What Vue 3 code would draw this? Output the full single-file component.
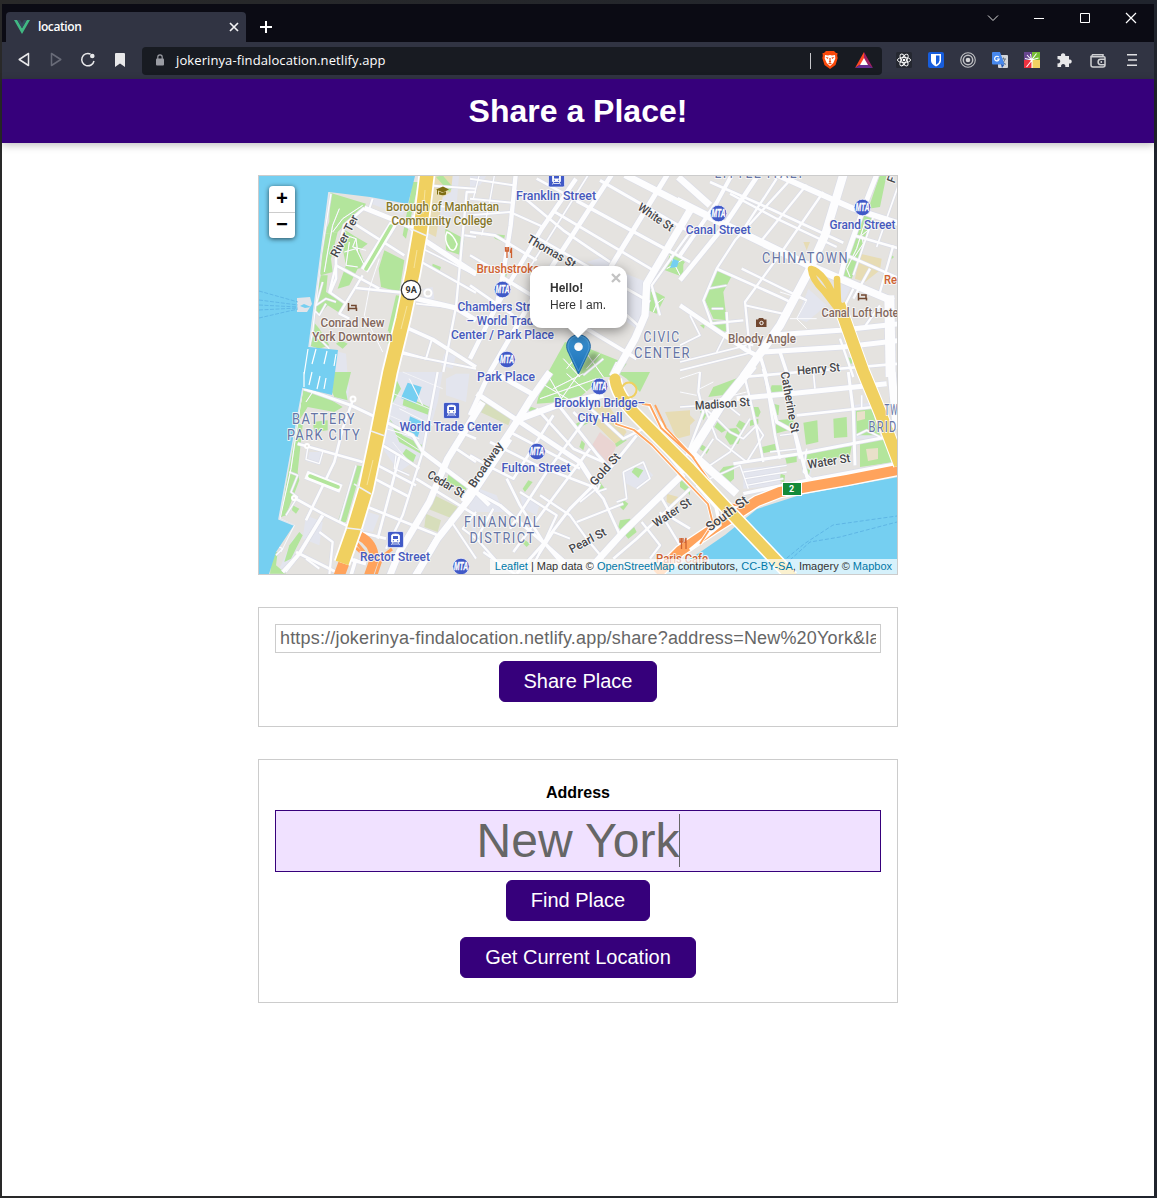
<script setup>
import { ref } from 'vue'

const shareLink = ref('https://jokerinya-findalocation.netlify.app/share?address=New%20York&lat=40.7127&lng=-74.0059')
const address = ref('New York')

// Streets are grouped in six sheets, each drawn at three times the map scale.
const sheets = [
  {
    x: 256, y: 172,
    zones: [
      'M495 0H610L600 120L550 160L505 205L480 160Z', 'M215 530L270 545L275 615H230Z',
      'M340 75L455 100L440 130L345 95Z', 'M500 350L530 345L535 380L505 385Z', 'M565 545L600 550L590 590L555 580Z'
    ],
    sand: ['M505 10H590L585 60L560 75L540 195L510 180L500 90Z'],
    parks: [
      'M222 62L330 95L320 115L290 135L245 180L205 185L220 150Z', 'M205 185L245 180L225 260L230 300L195 310L185 290Z',
      'M268 175L300 195L335 215L310 235L330 285L305 290L280 340L245 350L270 280L262 240Z',
      'M385 235L445 265L430 360L375 345L368 290Z', 'M195 310L215 310L210 360L250 385L270 400L255 425L215 400L190 430L170 410Z',
      'M165 440L190 470L220 520L190 530L158 520Z', 'M568 170L625 200L615 250L570 235Z', 'M530 275L555 285L550 300L527 292Z',
      'M400 470L415 475L410 520L395 515Z', 'M540 15L560 10L590 45L580 60Z', 'M470 30L488 30L450 200L440 190Z', 'M420 370L435 372L410 480L395 478Z',
      'M240 515L255 505L275 515L260 530Z'
    ],
    roads: [
      [8, 'M295 155L445 250'], [7, 'M500 272L660 362'], [14, 'M325 108L460 162L505 205'], [16, 'M505 205L660 306'],
      [24, 'M412 155L325 295'], [8, 'M240 280L370 350M300 348L440 362'], [15, 'M480 380L600 408L660 445'],
      [7, 'M320 310L250 425L280 440'], [7, 'M240 280L220 360L270 395'], [11, 'M425 455L530 502L660 585'], [7, 'M660 60L632 60L600 405L562 600'],
      [6, 'M510 40L660 50M505 100L660 110M625 190L660 195'], [6, 'M528 500L510 560L440 540'], [3, 'M370 260L340 350L325 430L380 540'],
      [8, 'M325 108L265 160L240 260L240 320L222 362'], [6, 'M470 130L505 205M350 80L340 110L460 162'], [6, 'M440 545L520 562L660 590'], [5, 'M480 395L600 408M500 230L660 310'],
      [4, 'M225 65L195 250L170 480L160 525M200 330L180 400L210 380L240 390M210 395L190 430L170 410M160 470L220 530'],
      [3, 'M270 190L300 200L290 225L330 235M265 240L300 230L325 280M280 210L270 280L305 285M300 200L305 240M250 110L230 160L215 240L205 300M320 100L260 140L230 180']
    ]
  },
  {
    x: 470, y: 172,
    zones: ['M350 270L400 255L430 290L530 330L540 420L500 470L470 450L470 330Z', 'M0 0L50 10L30 40L0 45Z'],
    sand: [],
    parks: [
      'M600 245L640 255L640 315L585 295Z', 'M540 350L585 375L560 425L535 415Z', 'M285 510L345 525L470 575L440 615H240L235 600Z',
      'M65 185L105 190L100 210L75 200Z', 'M100 300L112 300L105 330L95 325Z'
    ],
    roads: [
      [13, 'M137 8L122 160L102 290L80 400L0 560'], [13, 'M318 20L215 170L120 330L60 440'], [14, 'M425 8L235 300L60 600'],
      [15, 'M592 8L425 280L400 340'], [22, 'M660 115L530 335L525 430L495 500L430 615'], [6, 'M0 20L130 40M0 80L125 92M0 130L120 120L220 165'],
      [8, 'M0 180L75 190L200 265'], [8, 'M135 55L280 175L360 230L420 270'], [8, 'M200 20L660 270'], [9, 'M390 25L660 180'],
      [8, 'M320 88L610 245'], [8, 'M255 120L550 295'], [8, 'M190 190L540 390'], [20, 'M465 8L660 108'], [11, 'M95 315L300 440L500 560'],
      [8, 'M460 420L515 470'], [8, 'M0 340L130 430'], [7, 'M0 250L95 305'], [7, 'M660 180L545 340L570 430'], [5, 'M355 8L235 200L170 300'], [4, 'M30 0L10 80M75 0L55 110L35 190M400 560L340 610M440 570L420 610'],
      [3, 'M280 560L330 615M340 530L400 615M390 545L350 590M330 540L290 590M600 250L630 310M590 290L640 262M545 355L560 395L550 420M560 395L580 380']
    ]
  },
  {
    x: 680, y: 172,
    zones: ['M490 280L515 340L490 390L465 330Z', 'M385 350L440 400L380 450L350 440Z'],
    sand: ['M540 245L605 260L600 295L555 330L525 320Z', 'M370 210L390 210L380 235Z'],
    parks: [
      'M108 295L155 312L130 360L140 445L100 440L75 385Z', 'M90 445L138 448L138 480L95 465Z', 'M600 8L620 8L600 105L565 110Z',
      'M550 130L580 135L515 320L485 310L520 220Z', 'M0 260L15 270L0 290Z', 'M60 460L75 455L72 470Z', 'M630 245L642 255L635 262Z', 'M500 555L520 560L515 575L505 575Z'
    ],
    roads: [
      [22, 'M-10 85L130 155L390 282L640 388'], [12, 'M160 0L110 92L0 250'], [14, 'M235 8L130 165L0 325'], [7, 'M345 8L165 205L110 290L70 385L95 455'],
      [7, 'M290 20L185 180'], [7, 'M430 60L305 240L195 390L210 540'], [7, 'M380 38L245 205'], [25, 'M490 8L435 190L385 300L300 460L190 615'],
      [15, 'M590 8L550 110L490 280L480 320'], [8, 'M90 30L270 110L490 212'], [17, 'M290 8L520 110L660 155'], [20, 'M-5 15L90 100'], [7, 'M150 65L290 140L470 225'],
      [8, 'M110 290L300 375L335 392'], [7, 'M185 290L380 385'], [13, 'M0 400L200 535L240 555'], [6, 'M195 400L330 430'], [8, 'M520 190L660 230M500 250L660 320'],
      [7, 'M570 290L520 380M640 220L600 360M520 350L495 400'], [15, 'M270 490L480 475L660 455'], [15, 'M250 540L490 525L660 505'], [8, 'M190 615L360 600L660 575'],
      [30, 'M628 370L632 615'], [10, 'M240 550L260 615M300 540L325 615'], [7, 'M480 500L520 615M600 400L550 470'], [5, 'M0 595L220 540M0 570L200 520M30 430L60 490L0 520M140 480L110 540'],
      [3, 'M300 360L380 385L350 440L380 470M330 440H410M555 150L530 230L500 290L510 315M570 170L545 190L550 215L520 260'],
      [7, 'M90 455L190 445M140 420L145 500L220 520'], [5, 'M655 40L590 225M580 135L520 310'], [4, 'M85 350L140 340M95 410H130']
    ]
  },
  {
    x: 256, y: 372,
    zones: [
      'M225 0L280 40L275 85L250 90Z', 'M420 0H560L545 90L500 250L430 300L380 230L390 60Z', 'M570 20L600 5H640L630 90L570 70Z', 'M150 430L200 450L190 520L140 500Z',
      'M110 500L140 480L100 590H70Z', 'M640 350L660 340V500L640 450Z', 'M300 410L370 430L350 480L300 470Z', 'M160 240L200 240L190 275L155 270Z'
    ],
    sand: [],
    parks: [
      'M142 50L200 68L260 105L235 120L155 105L130 145L118 150Z', 'M235 0H285L270 60L275 85L235 75L228 60Z', 'M120 150L140 160L125 300L130 325L90 430L75 435L90 330Z',
      'M170 150L215 145L215 175L175 180Z', 'M300 280L318 283L270 450L245 450Z', 'M110 400L130 410L120 425L108 415Z', 'M420 20L435 50L400 110L395 80Z', 'M445 70L530 110L520 130L440 100Z',
      'M400 140L440 190L500 220L495 245L430 210Z', 'M450 230L480 250L470 275L440 245Z', 'M580 300L635 330L630 355L570 330Z', 'M130 480L140 490L105 560L85 570L100 520Z', 'M50 540L65 540L60 580L90 605H42Z'
    ],
    olive: ['M535 370L605 405L590 440L515 410Z', 'M510 425L555 445L545 480L505 465Z'],
    pools: ['M455 32L497 45L480 95L435 78Z', 'M462 133L500 150L485 195L452 180Z'],
    roads: [
      [9, 'M145 50L285 100L380 145L470 190L500 240'], [8, 'M292 80L260 170L235 270L150 445'], [8, 'M125 215L320 270'], [8, 'M110 375L200 425L310 480L390 500'],
      [26, 'M150 308L255 350'], [8, 'M380 220L430 250L490 290'], [8, 'M430 255L365 500'], [8, 'M365 280L480 340'], [8, 'M355 320L460 375'], [8, 'M335 405L545 490'],
      [7, 'M545 0L500 240L440 430L390 530'], [13, 'M500 240L660 360L700 400'], [8, 'M480 320L660 430'], [20, 'M680 90L575 260L520 390L430 540L400 615'], [20, 'M760 200L640 380L545 500L480 610'],
      [8, 'M600 230L660 270M540 150L660 200'], [6, 'M660 420L620 470L660 500M580 440L660 560'], [10, 'M545 490L470 615'], [11, 'M200 430L130 545L80 600'], [9, 'M120 540L240 600'], [7, 'M190 480L230 510L220 610'], [6, 'M150 560L190 590'],
      [11, 'M240 550L330 575M300 560L285 610'], [3, 'M140 50L105 290L72 440L115 460L75 540M130 50L170 60L150 90M460 20L500 100M430 110L530 160M390 170L490 200'],
      [4, 'M155 230L150 262L190 275L200 240M420 250L415 290L460 310M300 280L250 450M100 300L125 310L105 360L125 375L90 430M60 520L80 530L60 550M90 600L130 550'],
      [2, 'M400 60L520 110M400 90L450 110M400 130L490 170M420 190L490 235M410 210L450 260M440 0L560 50']
    ]
  },
  {
    x: 470, y: 372,
    zones: [
      'M0 340L80 370L100 420L20 420Z', 'M150 370L210 390L200 430L160 410Z', 'M460 300L520 280L550 310L500 350L460 330Z'
    ],
    sand: ['M370 105L415 100L470 180L440 220L370 150Z', 'M585 120L660 115V190L620 200Z', 'M590 365L625 375L620 405L590 390Z'],
    rose: ['M390 180L440 220L415 275L360 230Z'],
    olive: ['M35 80L60 90L125 130L115 160L20 115Z'],
    parks: [
      'M235 10L370 0L400 15L330 75L270 90L200 95L205 75Z', 'M440 0H540L510 60L470 20Z', 'M170 100L200 110L180 120Z', 'M310 160L345 140L360 150L320 172Z', 'M335 205L345 215L340 235L328 225Z',
      'M495 285L520 295L505 318L485 300Z', 'M175 325L188 330L165 360L158 350Z', 'M458 382L475 395L460 415L445 400Z', 'M450 445L480 440L500 480L475 500L445 465Z', 'M390 330L405 350L395 360L378 350Z', 'M160 500L180 515L170 525L160 515Z', 'M465 195L470 205L440 225L435 215Z', 'M625 325L660 350V370Z'
    ],
    roads: [
      [21, 'M-20 390L140 150L180 85L240 0'], [19, 'M150 140L260 100L400 68'], [15, 'M20 65L150 150L330 270L375 340'], [14, 'M60 0L0 130'], [15, 'M70 0L185 65'],
      [8, 'M200 110L310 230L400 270'], [9, 'M270 105L380 245L420 290'], [8, 'M340 90L460 200L520 170'], [8, 'M310 120L340 150L230 300L120 470'], [8, 'M250 130L130 320L70 290L0 250'],
      [8, 'M60 210L200 280L370 345'], [8, 'M140 150L60 260'], [8, 'M120 180L330 290'], [8, 'M360 230L240 390L130 540'], [9, 'M500 190L420 290L300 410L220 515L140 605'], [20, 'M640 305L460 480L360 590'],
      [8, 'M370 345L400 380L450 490'], [8, 'M110 320L150 400L220 510L310 590'], [10, 'M0 350L90 400L230 520L290 590'], [7, 'M210 370L300 430L350 500L400 560'], [7, 'M150 360L260 430L200 560'],
      [7, 'M40 540L140 610M70 410L20 500L100 590'], [8, 'M570 370L610 440L660 470'], [9, 'M530 170L640 305'], [8, 'M660 350L500 500L430 560'], [7, 'M515 450L570 520L540 560M570 420L630 520'],
      [5, 'M460 300L520 270L540 320L500 350M460 300L470 380L440 390M330 390L380 350L370 330M390 335L380 360L410 350'],
      [3, 'M210 80L380 20M250 50L340 5M260 100L330 0M225 40L300 85M290 5L350 60M240 20L280 90'],
      [6, 'M320 450L460 395M180 590L250 480L300 500']
    ]
  },
  {
    x: 680, y: 372,
    zones: ['M190 290L300 280L300 340L190 350Z', 'M520 100L580 90L590 200H520Z', 'M370 240L400 260L390 320L370 300Z'],
    sand: ['M0 120L30 130L45 145L0 190Z'],
    parks: [
      'M100 45L180 15L200 20L160 65L85 75Z', 'M275 40L305 40L310 62L268 62Z', 'M280 95L298 100L295 130L275 125Z', 'M145 170L170 168L185 190L175 215L150 218L135 195Z', 'M218 105L235 105L242 120L235 135L218 132Z',
      'M112 150L138 175L125 182L103 165Z', 'M178 145L197 155L185 175L168 162Z', 'M210 145L235 140L235 155L210 162Z', 'M62 215L88 232L80 245L60 232Z', 'M290 145L340 140V170L285 185Z',
      'M245 225L295 213L290 235L242 245Z', 'M315 255L350 248V270L320 275Z', 'M130 285L162 280V320L145 335L118 300Z', 'M302 305L315 310L312 335L300 325Z', 'M370 152L412 145L415 210L378 218Z', 'M460 140L500 135L502 195L462 198Z',
      'M528 115L575 110L600 190L530 190Z', 'M540 215L620 197L645 270L540 285Z', 'M380 238L515 222L510 250L430 265L370 262Z', 'M375 285L390 295L385 318L375 310Z', 'M60 118L90 110L70 145Z', 'M0 320L30 350L20 360L0 345Z'
    ],
    roads: [
      [26, 'M220 -20L130 90L35 240'], [24, 'M30 240L170 365'], [15, 'M170 80L330 65L620 35'], [8, 'M350 130L580 105'], [9, 'M160 275L360 245L620 195'], [10, 'M190 365L380 325L650 275'],
      [10, 'M250 -10L290 150L345 180L385 330'], [8, 'M255 0L285 190L300 260'], [9, 'M505 0L520 120L525 280'], [24, 'M635 0L650 170'], [7, 'M190 0L210 80L230 170L250 270'], [8, 'M340 170L360 260'],
      [5, 'M75 110L110 200L200 270L250 190L230 160L190 200L150 180L110 140L75 110M100 200L60 260M210 140L150 240L90 280M180 130L130 90'], [7, 'M60 0L55 60L70 120L20 250'],
      [4, 'M90 320L180 280L205 350M190 300L320 280M195 320L320 300M200 340L310 320M300 190L340 185M270 240L360 230'], [5, 'M400 0L405 50M0 105L150 95M380 230L370 300L395 320M530 190L560 175L600 195M545 110V70'],
      [3, 'M100 30L60 50M0 60L50 70M0 20L60 0M80 90L200 60']
    ]
  }
]

const BLUE = '#4659bd'
const AREA = '#6675a5'
const DARK = '#46464a'
const BROWN = '#83685d'
const ORANGE = '#cf6231'
const OLIVE = '#85772b'

// text, centre x, baseline y, width, colour, rotation, size
const labels = [
  ['Borough of Manhattan', 442.5, 210.8, 113, OLIVE], ['Community College', 442, 225, 101, OLIVE],
  ['Franklin Street', 556, 199.6, 80, BLUE], ['Canal Street', 718.3, 234, 65, BLUE], ['Grand Street', 862.5, 228.7, 66, BLUE],
  ['White St', 653.5, 220.5, 40, DARK, 34], ['Thomas St', 549.5, 255, 54, DARK, 30],
  ['Brushstroke', 508, 272.5, 63, ORANGE], ['Chambers Street', 502.5, 310.5, 90, BLUE], ['– World Trade', 503, 325, 73, BLUE], ['Center / Park Place', 502.5, 339.2, 103, BLUE],
  ['Park Place', 506, 381.3, 58, BLUE], ['World Trade Center', 451, 431.3, 103, BLUE], ['Brooklyn Bridge–', 599.7, 407.4, 91, BLUE], ['City Hall', 600, 421.7, 45, BLUE],
  ['Fulton Street', 536, 472.3, 69, BLUE], ['Rector Street', 395, 560.5, 70, BLUE], ['Conrad New', 352.5, 326.7, 64, BROWN], ['York Downtown', 352.3, 341, 80, BROWN],
  ['Bloody Angle', 762, 343.2, 68, BROWN], ['Canal Loft Hote', 860, 316.8, 77, BROWN], ['Re', 890.5, 284, 13, ORANGE], ['Paris Cafe', 682, 562.5, 52, ORANGE],
  ['Henry St', 818.8, 373, 43, DARK, -5], ['Madison St', 722.6, 407.8, 55, DARK, -4], ['Catherine St', 786, 403, 62, DARK, 80], ['Water St', 829.5, 465.3, 43, DARK, -9],
  ['Cedar St', 444, 487.5, 41, DARK, 31], ['Broadway', 489, 467, 52, DARK, -56], ['Gold St', 608, 472, 39, DARK, -48], ['Pearl St', 589.5, 544, 40, DARK, -28],
  ['Water St', 674, 516, 43, DARK, -33], ['South St', 729.5, 517, 49, DARK, -37, 13], ['River Ter', 348, 238, 46, DARK, -62], ['F', 895.500, 181, 6, DARK, -70]
]
const areas = [
  ['CHINATOWN', 805.5, 263.4, 87], ['LITTLE ITALY', 760, 178, 91], ['CIVIC', 662, 342, 37], ['CENTER', 662.5, 358.3, 57], ['BATTERY', 324, 424, 64], ['PARK CITY', 324, 440.2, 74],
  ['FINANCIAL', 502.5, 526.8, 77], ['DISTRICT', 502.5, 543.2, 66], ['TW', 891.5, 415.3, 14], ['BRID', 883, 431.8, 29]
]
const metro = [[502.5, 289.5], [507, 359.5], [599.5, 386.5], [537, 451.5], [461, 566.5], [718.5, 213.5], [862.5, 207.5]]
const trains = [[556.5, 179], [451.5, 410.5], [395.5, 539.5]]
</script>

<template>
  <div class="desktop">
    <div class="window">
      <div class="titlebar">
        <div class="tab">
          <svg class="vue-logo" viewBox="0 0 16 14"><path fill="#41b883" d="M0 0h3.2L8 8.2 12.8 0H16L8 14z" /><path fill="#35495e" d="M3.2 0H6l2 3.5L10 0h2.8L8 8.2z" /></svg>
          <span>location</span>
          <svg class="tab-close" viewBox="0 0 10 10"><path d="M1 1l8 8M9 1L1 9" stroke="#f2f2f4" stroke-width="1.7" /></svg>
        </div>
        <svg class="new-tab" viewBox="0 0 12 12"><path d="M6 0v12M0 6h12" stroke="#fff" stroke-width="2" /></svg>
        <div class="controls">
          <svg viewBox="0 0 12 12"><path d="M1 3.5l5 5 5-5" fill="none" stroke="#ddd" /></svg>
          <svg viewBox="0 0 12 12"><path d="M1 6.5h10" stroke="#fff" /></svg>
          <svg viewBox="0 0 12 12"><path d="M1.500 1.500h9v9h-9z" fill="none" stroke="#fff" /></svg>
          <svg viewBox="0 0 12 12"><path d="M1 1l10 10M11 1L1 11" stroke="#fff" stroke-width="1.200" /></svg>
        </div>
      </div>

      <div class="toolbar">
        <div class="nav">
          <svg viewBox="0 0 16 16"><path d="M12.500 1.500v12L3.200 7.500z" fill="none" stroke="#e8e8ea" stroke-width="1.500" stroke-linejoin="round" /></svg>
          <svg viewBox="0 0 16 16"><path d="M3.500 1.500v12L12.800 7.500z" fill="none" stroke="#686b78" stroke-width="1.500" stroke-linejoin="round" /></svg>
          <svg viewBox="0 0 16 16"><path d="M14 9A6.200 6.200 0 1 1 10.500 2" fill="none" stroke="#e8e8ea" stroke-width="1.500" /><circle cx="12.300" cy="4" r="2.300" fill="#e8e8ea" /></svg>
          <svg viewBox="0 0 16 16"><path d="M4 1h8q1 0 1 1v13l-5-3.600L3 15V2q0-1 1-1z" fill="#e8e8ea" /></svg>
        </div>
        <div class="addressbar">
          <svg class="lock" viewBox="0 0 8 12"><path d="M1.800 5V3a2.200 2.200 0 0 1 4.400 0v2" fill="none" stroke="#9a9ca3" stroke-width="1.200" /><rect y="4.500" width="8" height="7" rx="1" fill="#9a9ca3" /></svg>
          <span class="host">jokerinya-findalocation.netlify.app</span>
          <i class="divider"></i>
          <svg class="shield" viewBox="0 0 16 18"><path d="M4 0h8l2 2 1.500 0-.3 3 .5 2-2.200 7L8 18l-5.500-4L.3 7l.5-2L.5 2H2z" fill="#fb4a0c" /><path d="M3 4l3 .4L8 4l2 .4 3-.4.300 3.500-2 4.500L8 15l-3.300-3-2-4.500z" fill="#fff" /><path d="M3.500 6l3 .6-.8 1.300zM12.500 6l-3 .6.8 1.300zM7.300 7h1.400l-.2 2.500.8 1L8 11.400l-1.300-.9.8-1zM6 12.200l2-.7 2 .7-2 1.200z" fill="#fb4a0c" /></svg>
          <svg class="triangle" viewBox="0 0 18 16"><path d="M9 0L0 16l9-6z" fill="#ff4724" /><path d="M9 0l9 16-9-6z" fill="#9e1f63" /><path d="M0 16h18l-9-6z" fill="#662d91" /><path d="M9 6l-4 7h8z" fill="#fff" /></svg>
        </div>
        <div class="extensions">
          <svg viewBox="0 0 16 16"><rect width="16" height="16" rx="1.500" fill="#252831" /><g fill="none" stroke="#fff" stroke-width=".9"><ellipse cx="8" cy="8" rx="6.600" ry="2.600" /><ellipse cx="8" cy="8" rx="6.600" ry="2.600" transform="rotate(60 8 8)" /><ellipse cx="8" cy="8" rx="6.600" ry="2.600" transform="rotate(120 8 8)" /></g><circle cx="8" cy="8" r="1.300" fill="#fff" /></svg>
          <svg viewBox="0 0 16 16"><rect width="16" height="16" rx="2" fill="#175ddc" /><path d="M3 2h10v6.500q0 3.500-5 6-5-2.500-5-6z" fill="#fff" /><path d="M8 3.500h3.500V8.500q0 2.200-3.500 4.200z" fill="#175ddc" /></svg>
          <svg viewBox="0 0 16 16"><g fill="none" stroke="#bfc0c3"><circle cx="8" cy="8" r="7.300" stroke-width="1.100" /><circle cx="8" cy="8" r="4.700" stroke-width="1.500" /></g><circle cx="8" cy="8" r="2.300" fill="#d4d4d6" /></svg>
          <svg viewBox="0 0 16 16"><rect x="6" y="3" width="10" height="13" rx="1" fill="#d3d5d9" /><path d="M9 7h5M11.500 5.500V7M13 7q-1 4-4 6M10 8q1 3 4 4.500" stroke="#687481" fill="none" /><path d="M1 0h7l4.500 12.500H1q-1 0-1-1V1q0-1 1-1z" fill="#4788ee" /><path d="M9 12.500h3.500L10 16z" fill="#2457b5" /><path d="M6.800 5.200A2.300 2.300 0 1 0 7.200 7H5" fill="none" stroke="#fff" stroke-width="1.200" /></svg>
          <svg viewBox="0 0 16 16"><path d="M0 0h8v8H0z" fill="#68468f" /><path d="M8 0h8v8H8z" fill="#76bd35" /><path d="M0 8h8v8H0z" fill="#ed3240" /><path d="M8 8h8v8H8z" fill="#f1d262" /><path d="M7.500 8L6.500 2M7.500 8L3 3M7.500 8L1 6.500M7.500 8l5-6.500M7.500 8l7-2M8 8l-5.500 7M8 8v8" stroke="#fff" stroke-width="1.100" /></svg>
          <svg viewBox="0 0 16 16"><path d="M1.500 4H5a2.200 2.200 0 1 1 4.200 0H13v3.500a2.100 2.100 0 1 1 0 4V15H9.200a2.200 2.200 0 1 0-4 0H1.500v-3.700a2.100 2.100 0 1 0 0-4z" fill="#e8e8ea" /></svg>
          <svg class="wallet" viewBox="0 0 16 14"><path d="M15 5V3.800q0-1-1-1H2.500a1.200 1.200 0 0 1 0-2H13v2M1 1.800V11q0 2 2 2h10q2 0 2-2V5.300H10.800a2.700 2.700 0 0 0 0 5.400H15" fill="none" stroke="#cfd0d3" stroke-width="1.500" /><circle cx="11.300" cy="8" r=".9" fill="#cfd0d3" /></svg>
          <svg viewBox="0 0 16 16"><path d="M3 2.800h10M4 8h9M3 13.200h10" stroke="#e0e0e3" stroke-width="1.500" /></svg>
        </div>
      </div>

      <div class="page">
        <header><h1>Share a Place!</h1></header>
        <main>
          <section class="map">
            <svg class="tiles" viewBox="259 176 638 398">
              <rect x="259" y="176" width="638" height="398" fill="#e5e3e0" />
              <g v-for="(s, i) in sheets" :key="'land' + i" :transform="`translate(${s.x} ${s.y}) scale(.33333)`">
                <path v-for="d in s.zones" :key="d" :d="d" fill="#e3e5ee" />
                <path v-for="d in s.sand" :key="d" :d="d" fill="#e7dcb4" />
                <path v-for="d in s.rose || []" :key="d" :d="d" fill="#ead4d2" />
                <path v-for="d in s.olive || []" :key="d" :d="d" fill="#d7debb" />
                <path v-for="d in s.parks" :key="d" :d="d" fill="#b3e59c" />
                <path v-for="d in s.pools || []" :key="d" :d="d" fill="#75cff1" />
              </g>
              <g fill="none" stroke="#dbdde7" stroke-linejoin="round">
                <g v-for="(s, i) in sheets" :key="'case' + i" :transform="`translate(${s.x} ${s.y}) scale(.33333)`">
                  <path v-for="r in s.roads" :key="r[1]" :d="r[1]" :stroke-width="r[0] > 3 ? r[0] + 4 : r[0]" />
                </g>
              </g>
              <g fill="none" stroke="#fdfdfe" stroke-linejoin="round">
                <g v-for="(s, i) in sheets" :key="'road' + i" :transform="`translate(${s.x} ${s.y}) scale(.33333)`">
                  <path v-for="r in s.roads" :key="r[1]" :d="r[1]" :stroke-width="r[0]" />
                </g>
              </g>
              <!-- planted medians and small circles -->
              <g fill="none" stroke="#b3e59c" stroke-width="3.500" stroke-linecap="round">
                <path d="M391 226L366 269M310 476L338 487" />
              </g>
              <g fill="#e5e3e0" stroke="#fff" stroke-width="2"><circle cx="353" cy="399" r="2.500" /><circle cx="307" cy="446" r="2" /><circle cx="294" cy="498" r="2" /><circle cx="428" cy="293" r="3.500" /></g>
              <path d="M447 232q6 2 10 12q-2 9-7 5q-7-9-3-17z" fill="none" stroke="#fff" stroke-width="1.500" />
              <path d="M857 412l8-1v8l-8 2zM866 449l12-1v11l-10 2z" fill="#e9e0c9" />
              <path d="M673 259l6 2-2 6-7 1z" fill="#75cff1" />

              <!-- rivers -->
              <path d="M259 176H415L408 204L370 197L329 192L309 347L338 350L332 395L303 388L279 519L294 525L276 552L269 574H259Z" fill="#75cff1" />
              <path d="M664 574L693 557L725 535L757 509L800 495L860 484L898 477V574Z" fill="#75cff1" />
              <path d="M329 192L309 347M303 388L279 519L294 525" fill="none" stroke="#e2e7ee" stroke-width="1.500" />
              <path d="M316 349L312 364M327 351L324 364M336 354L334 366M308 349L304 375M304 372V387M312 372L309 385M320 376L317 389M326 378L324 389" fill="none" stroke="#fff" stroke-width="1.200" />
              <path d="M297 298l13-1 2 7-5 8h-10z" fill="#e1e4e9" /><path d="M300 306l4-2 7 3-6 1z" fill="#75cff1" />
              <path d="M259 291L298 302M259 300L298 305M259 305L298 307M259 310L298 308M259 318L298 309" fill="none" stroke="#58aee1" stroke-width=".7" stroke-dasharray="4 1.500" />
              <path d="M782 562L804 544L833 525L897 516M790 560L810 542L840 537L897 522" fill="none" stroke="#58aee1" stroke-width=".8" stroke-dasharray="4 2" />

              <!-- highways -->
              <g fill="none" stroke-linejoin="round">
                <path d="M657 574L680 551L713 529L737 514L757 501L780 492L813 486L847 480L898 470" stroke="#fff" stroke-width="12.500" />
                <path d="M657 574L680 551L713 529L737 514L757 501L780 492L813 486L847 480L898 470" stroke="#ffa35c" stroke-width="10" />
                <path d="M642 404L650 405L661 428L692 456L710 482L726 504L745 506M617 414L616 424L634 430L652 445L684 479L708 504L713 524L700 544M649 405L657 420L690 453M697 485L716 507L720 525L690 550" stroke="#fff" stroke-width="3.500" />
                <path d="M642 404L650 405L661 428L692 456L710 482L726 504L745 506M617 414L616 424L634 430L652 445L684 479L708 504L713 524L700 544M655 405L666 428L694 458" stroke="#ffa35c" stroke-width="1.800" />
                <path d="M339 576L345 560" stroke="#ffa35c" stroke-width="11" />
                <path d="M360 536Q375 544 374 560L368 577" stroke="#ffa35c" stroke-width="9" /><path d="M355 541L371 560M355 547L367 558M376 575L382 557L392 549" stroke="#ffa35c" stroke-width="3" />
                <path d="M427 174L420 232L413 272L403 319L390 372L378 432L366 489L353 532L342 563" stroke="#fff" stroke-width="17" />
                <path d="M427 174L420 232L413 272L403 319L390 372L378 432L366 489L353 532L342 563" stroke="#f0d060" stroke-width="13.500" />
                <path d="M417 250L414 268M407 306L401 329M373 460L367 485M425 190L423 214" stroke="#f8e8aa" stroke-width=".8" />
                <path d="M409 228L427 236M371 431L385 436M354 484L371 494M347 528L364 530" stroke="#eef0f5" stroke-width="1.500" />
                <path d="M615 379Q617 396 637 416L690 469L733 515L792 577" stroke="#fff" stroke-width="14" />
                <path d="M615 379Q617 396 637 416L690 469L733 515L792 577" stroke="#f0d060" stroke-width="11" stroke-linecap="round" />
                <circle cx="629" cy="390" r="7.500" stroke="#f0d060" stroke-width="2" />
                <path d="M839 304L863 371L880 412L900 465" stroke="#fff" stroke-width="14" />
                <path d="M839 304L863 371L880 412L900 465M837 279L838 304M811 269Q812 280 824 291L840 312M811 269Q825 272 838 306" stroke="#f0d060" stroke-linecap="round" stroke-width="6.500" />
                <path d="M839 304L863 371L880 412L900 465" stroke="#f0d060" stroke-width="12" />
              </g>

              <g class="map-text">
                <text v-for="l in labels" :key="l[0] + l[1]" :x="l[1]" :y="l[2]" :textLength="l[3]" :fill="l[4]" :font-size="l[6] || 12" lengthAdjust="spacingAndGlyphs" :transform="`rotate(${l[5] || 0} ${l[1]} ${l[2]})`">{{ l[0] }}</text>
                <text v-for="a in areas" :key="a[0]" class="area" :x="a[1]" :y="a[2]" :textLength="a[3]" lengthAdjust="spacingAndGlyphs" :fill="AREA">{{ a[0] }}</text>
              </g>

              <g v-for="m in metro" :key="m[0]" :transform="`translate(${m[0]} ${m[1]})`">
                <circle r="8.300" fill="#4059c7" stroke="#f2f3fa" stroke-width=".8" />
                <text class="mta" y="3.700" textLength="14" lengthAdjust="spacingAndGlyphs">MTA</text>
              </g>
              <g v-for="t in trains" :key="t[0]" :transform="`translate(${t[0]} ${t[1]})`">
                <rect x="-8" y="-8" width="16" height="16" rx="1.500" fill="#4059c7" stroke="#f2f3fa" stroke-width=".7" />
                <path d="M-4 2.500V-4Q-4-5.500 0-5.500T4-4V2.500zM-2.500 2.500L-4 5.500M2.500 2.500L4 5.500M-3 4.500H3" fill="#fff" stroke="#fff" stroke-width=".8" />
                <path d="M-2.500-3.500h5V-.500h-5zM-2.700.7h1.200v1h-1.200zM1.500.7h1.200v1H1.500z" fill="#4059c7" />
              </g>

              <path d="M436 189.500l7-3 6 3-6 3zM439 191.500v3q4 1.500 7 0v-3l-3.500 1.500z" fill="#7d6d12" />
              <path d="M437.500 190v4.500" stroke="#7d6d12" />
              <g fill="none" stroke="#71472f" stroke-width="1.500">
                <path d="M348.500 303v8M348.500 308.500h8v2.500M351 305.500h5v3M858.500 293v7.500M858.500 298.500h8v2M861 295h5v3" />
              </g>
              <path d="M756 319.500h2l1-1.500h4l1 1.500h2.500v7.500H756z" fill="#71472f" /><circle cx="761.500" cy="323" r="1.700" fill="none" stroke="#fff" />
              <g fill="none" stroke="#cf6231" stroke-width="1.300"><path d="M505.500 247v4h3v-4M507 247v11M511.500 258v-10q-1 2-1 5M680 538v4h3v-4M681.500 538v11M686 549v-11q-1 2-1 5" /></g>

              <circle cx="411" cy="290" r="9.700" fill="#fff" stroke="#353535" stroke-width="1.300" />
              <text class="route" x="411.200" y="293.200">9A</text>
              <rect x="782.500" y="482.500" width="19" height="13" fill="#128a39" stroke="#fff" />
              <text class="route green" x="791.500" y="492.300">2</text>
            </svg>

            <svg class="marker" viewBox="0 0 45 44">
              <defs>
                <linearGradient id="pin" x2="0" y2="1"><stop stop-color="#3c93d3" /><stop offset="1" stop-color="#1a6fb5" /></linearGradient>
                <filter id="soft"><feGaussianBlur stdDeviation="2" /></filter>
              </defs>
              <path d="M12.500 41L18 27q5-9 12-8 5 5-2 11z" fill="#222" opacity=".32" filter="url(#soft)" />
              <path d="M12.500.8C6 .8.700 5.800.700 12.300c0 3 1 5 2.200 7.300L12.500 40l9.600-20.400c1.200-2.300 2.200-4.300 2.200-7.300C24.300 5.800 19 .8 12.500.8z" fill="url(#pin)" stroke="#2469a5" />
              <path d="M12.500 2C7 2 2 6.400 2 12.300c0 2.700.9 4.600 2 6.800l8.500 18 8.500-18c1.100-2.200 2-4.100 2-6.800C23 6.400 18 2 12.500 2z" fill="none" stroke="#64abdf" opacity=".6" />
              <circle cx="12.500" cy="12.800" r="4.300" fill="#fff" />
            </svg>

            <div class="popup">
              <b>Hello!</b><span>Here I am.</span>
              <svg class="popup-close" viewBox="0 0 10 10"><path d="M1 1l8 8M9 1L1 9" stroke="#c3c3c3" stroke-width="2.300" /></svg>
            </div>
            <div class="zoom"><span>+</span><span>−</span></div>
            <div class="credit"><a>Leaflet</a> | Map data © <a>OpenStreetMap</a> contributors, <a>CC-BY-SA</a>, Imagery © <a>Mapbox</a></div>
          </section>

          <section class="card share">
            <div class="field link"><span>{{ shareLink }}</span></div>
            <button>Share Place</button>
          </section>

          <section class="card find">
            <label>Address</label>
            <div class="field focus"><span>{{ address }}</span></div>
            <button>Find Place</button>
            <button class="locate">Get Current Location</button>
          </section>
        </main>
      </div>
    </div>
  </div>
</template>

<style>
body { margin: 0; background: #22252c; }
</style>

<style scoped>
* { box-sizing: border-box; }
svg { display: block; flex: none; }
.desktop { height: 1198px; padding: 4px 3px 2px 2px; overflow: hidden; background: linear-gradient(90deg, #292929, #20242d); font-family: "Liberation Sans", Arial, sans-serif; }
.window { height: 1192px; display: flex; flex-direction: column; background: #fff; }
.titlebar { height: 38px; display: flex; align-items: flex-end; padding-left: 4px; background: #0b0b14; }
.tab { width: 240px; height: 30px; display: flex; align-items: center; padding: 0 7px 0 8px; border-radius: 4px 4px 0 0; background: #313443; color: #fff; font: 600 12px "Open Sans", "Noto Sans", sans-serif; letter-spacing: -.4px; }
.vue-logo { width: 16px; height: 14px; margin-right: 8px; }
.tab span { position: relative; top: -1px; }
.tab-close { width: 10px; height: 10px; margin-left: auto; }
.new-tab { width: 12px; height: 12px; margin: 0 0 9px 14px; }
.controls { display: flex; gap: 34px; margin-left: auto; padding: 0 17px 18px 0; }
.controls svg { width: 12px; height: 12px; }
.toolbar { height: 37px; display: flex; align-items: center; background: #313443; }
.nav { display: flex; gap: 16px; padding-left: 14px; }
.nav svg { width: 16px; height: 16px; }
.addressbar { width: 740px; height: 28px; display: flex; align-items: center; margin-left: 14px; padding: 0 9px 0 14px; border-radius: 4px; background: #181b22; color: #fff; font: 13px "Open Sans", "Noto Sans", sans-serif; letter-spacing: .1px; }
.host { margin-top: -2px; }
.lock { width: 8px; height: 12px; margin-right: 12px; }
.divider { width: 1px; height: 16px; margin-left: auto; background: #c6c7ca; }
.shield { width: 16px; height: 18px; margin-left: 11px; }
.triangle { width: 18px; height: 16px; margin-left: 17px; }
.extensions { display: flex; align-items: center; gap: 16px; margin-left: 14px; }
.extensions svg { width: 16px; height: 16px; }
.extensions .wallet { height: 14px; margin: 0 2px; }
.nav svg, .lock, .shield, .triangle, .extensions svg { margin-top: -1px; }
.page { flex: 1; }
header { height: 64px; display: flex; align-items: center; justify-content: center; background: #36007b; color: #fff; box-shadow: 0 2px 8px rgba(0, 0, 0, .26); }
h1 { margin: 0; font-size: 32px; line-height: 36px; }
main { width: 640px; display: flex; flex-direction: column; gap: 32px; margin: 32px auto; }
.map { position: relative; height: 400px; border: 1px solid #ccc; overflow: hidden; }
.tiles { width: 638px; height: 398px; }
.map-text { font-family: Roboto, "Noto Sans", sans-serif; font-weight: 500; text-anchor: middle; paint-order: stroke; stroke: rgba(250, 250, 250, .85); stroke-width: 2px; stroke-linejoin: round; }
.area { font-size: 14px; font-weight: 400; letter-spacing: 1.6px; }
.mta { fill: #fff; font: italic bold 10px "Liberation Sans", sans-serif; text-anchor: middle; stroke: #fff; stroke-width: .3px; }
.route { fill: #333; font: bold 9px Roboto, sans-serif; text-anchor: middle; }
.green { fill: #fff; }
.marker { position: absolute; left: 307px; top: 158px; width: 45px; height: 44px; }
.popup { position: absolute; left: 271px; top: 90px; width: 97px; height: 62px; display: flex; flex-direction: column; padding: 14px 20px 0; border-radius: 12px; background: #fff; color: #333; font-size: 12px; line-height: 17px; white-space: nowrap; filter: drop-shadow(0 3px 6px rgba(0, 0, 0, .4)); }
.popup::after { content: ""; position: absolute; left: 37px; top: 61px; border: 11px solid transparent; border-top-color: #fff; border-bottom: 0; }
.popup-close { position: absolute; left: 81px; top: 7px; width: 10px; height: 10px; }
.zoom { position: absolute; left: 10px; top: 10px; width: 26px; height: 52px; border-radius: 4px; background: #fff; box-shadow: 0 1px 5px rgba(0, 0, 0, .65); color: #000; font: bold 20px/28px "Liberation Mono", monospace; text-align: center; }
.zoom span { display: block; height: 26px; }
.zoom span + span { border-top: 1px solid #ccc; line-height: 26px; }
.credit { position: absolute; right: 0; bottom: 0; padding: 0 5px; background: rgba(255, 255, 255, .7); color: #333; font-size: 11px; line-height: 15.500px; white-space: nowrap; }
.credit a { color: #0078a8; }
.card { display: flex; flex-direction: column; align-items: center; padding: 16px; border: 1px solid #ccc; }
.share { height: 120px; }
.find { height: 244px; padding-top: 23px; }
.field { width: 100%; border: 1px solid #ccc; color: #666; white-space: nowrap; }
.link { height: 29px; padding: 0 4px; font-size: 18px; line-height: 26px; letter-spacing: .18px; }
.link span { display: block; overflow: hidden; }
.focus { height: 62px; display: flex; justify-content: center; border-color: #36007b; background: #f0e1ff; font-size: 48px; line-height: 60px; }
.focus span { position: relative; }
.focus span::after { content: ""; position: absolute; left: 100%; top: 3px; width: 1px; height: 53px; background: #666; }
label { margin-bottom: 8px; color: #000; font-size: 16px; font-weight: bold; line-height: 19px; }
button { height: 41px; margin: 8px 0 0; padding: 8px 24px; border: 1px solid #36007b; border-radius: 6px; background: #36007b; color: #fff; font: 20px/23px "Liberation Sans", Arial, sans-serif; white-space: nowrap; }
.locate { margin-top: 16px; }
</style>
